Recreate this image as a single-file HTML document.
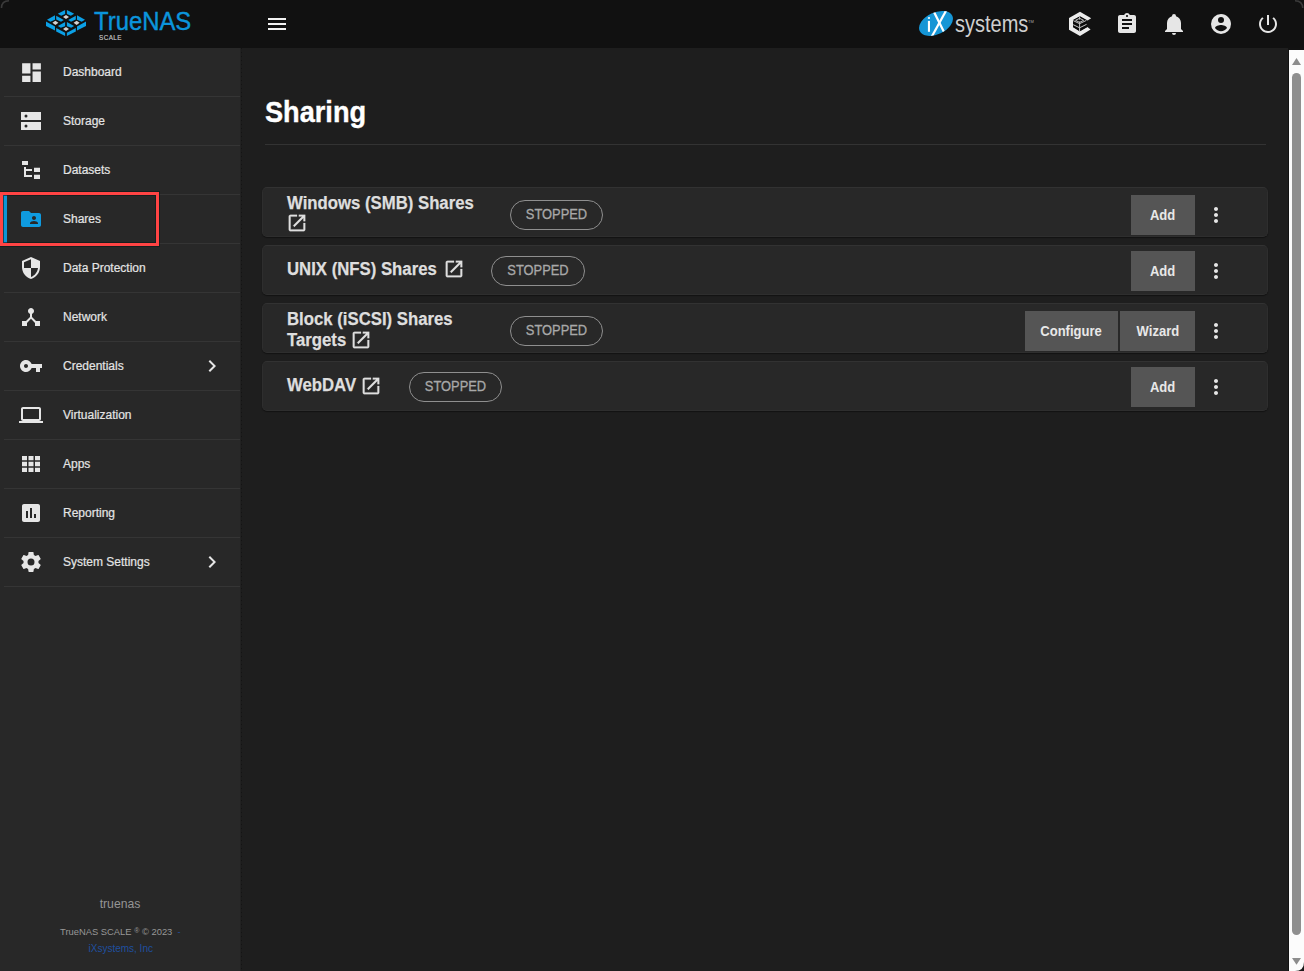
<!DOCTYPE html>
<html><head><meta charset="utf-8">
<style>
*{box-sizing:border-box;margin:0;padding:0}
html,body{width:1304px;height:971px;overflow:hidden;background:#1e1e1e;font-family:"Liberation Sans",sans-serif}
.abs{position:absolute}
svg{position:absolute;display:block}
#hdr{left:0;top:0;width:1304px;height:48px;background:#111111}
#side{left:0;top:48px;width:240px;height:923px;background:#282828}
#sideshadow{left:240px;top:48px;width:1px;height:923px;background:#222222}
#sidedots{left:241px;top:48px;width:1px;height:923px;background:repeating-linear-gradient(to bottom,#141414 0 1.5px,#1c1c1c 1.5px 4px)}
.item{position:absolute;left:0;width:240px;height:48px}
.item .lbl{position:absolute;left:63px;top:0;line-height:48px;font-size:12px;color:#e4e4e4;-webkit-text-stroke:0.2px #e4e4e4;white-space:nowrap}
.div{position:absolute;left:4px;width:236px;height:1px;background:#353535}
.ico{fill:#e6e6e6}
#lborder{left:0;top:0;width:1px;height:971px;background:#000}
.card{position:absolute;left:262px;width:1006px;height:50px;background:#282828;border-radius:5px;border:1px solid #2e2e2e;border-top-color:#323232;box-shadow:0 1px 1px #121212}
.ttl{position:absolute;font-weight:bold;font-size:18px;color:#dedede;-webkit-text-stroke:0.25px #dedede;white-space:nowrap;transform-origin:0 0;transform:scaleX(0.93)}
.chip{position:absolute;height:30px;border:1px solid #8f8f8f;border-radius:15px}
.chip span{position:absolute;left:0;right:0;top:-1px;line-height:28px;text-align:center;font-size:14px;color:#a8a8a8;-webkit-text-stroke:0.3px #a8a8a8;transform:scaleX(0.92)}
.btn{position:absolute;height:40px;background:#555555;color:#e8e8e8;font-weight:bold;font-size:14px;line-height:40px;text-align:center}
.btn span{display:inline-block;transform:scaleX(0.93)}
</style></head><body>
<div id="lborder" class="abs"></div>
<!-- HEADER -->
<div id="hdr" class="abs">
  <!-- TrueNAS logo mark -->
  <svg style="left:44px;top:6px" width="46" height="34" viewBox="44 6 46 34"><polygon points="57.8,13.7 65.1,9.9 65.1,14.1 61.2,15.7" fill="#0ba0e6"/><polygon points="74.2,13.7 66.9,9.9 66.9,14.1 70.8,15.7" fill="#0ba0e6"/><polygon points="47.0,19.7 55.0,15.3 55.0,19.7 50.3,21.8" fill="#0ba0e6"/><polygon points="85.0,19.7 77.0,15.3 77.0,19.7 81.7,21.8" fill="#0ba0e6"/><polygon points="46.0,21.4 46.0,25.9 55.0,30.5 55.0,26.4" fill="#0ba0e6"/><polygon points="86.0,21.4 86.0,25.9 77.0,30.5 77.0,26.4" fill="#0ba0e6"/><polygon points="56.2,15.8 63.8,20.0 61.0,21.8 56.2,19.4" fill="#0ba0e6"/><polygon points="75.8,15.8 68.2,20.0 71.0,21.8 75.8,19.4" fill="#0ba0e6"/><polygon points="57.9,26.0 65.1,22.1 65.1,26.2 60.8,27.7" fill="#0ba0e6"/><polygon points="74.1,26.0 66.9,22.1 66.9,26.2 71.2,27.7" fill="#0ba0e6"/><polygon points="56.2,28.1 65.1,32.7 65.1,36.1 56.2,31.5" fill="#0ba0e6"/><polygon points="75.8,28.1 66.9,32.7 66.9,36.1 75.8,31.5" fill="#0ba0e6"/><polygon points="63,17 66,14.9 69,17 66,19.1" fill="#d2d2d2"/><polygon points="52.4,22.8 55.4,20.7 58.4,22.8 55.4,24.900000000000002" fill="#d2d2d2"/><polygon points="73.6,22.8 76.6,20.7 79.6,22.8 76.6,24.900000000000002" fill="#d2d2d2"/><polygon points="63,29 66,26.9 69,29 66,31.1" fill="#d2d2d2"/></svg>
  <div class="abs" style="left:94px;top:7px;font-size:25px;color:#0b95dc;-webkit-text-stroke:0.4px #0b95dc;white-space:nowrap;transform-origin:0 0;transform:scaleX(0.955)">TrueNAS</div>
  <div class="abs" style="left:99px;top:33.5px;font-size:6.3px;color:#c8c8c8;letter-spacing:0.45px;-webkit-text-stroke:0.15px #c8c8c8">SCALE</div>
  <!-- hamburger -->
  <svg style="left:265px;top:12px" width="24" height="24" viewBox="0 0 24 24"><path fill="#f2f2f2" d="M3 18h18v-2H3v2zm0-5h18v-2H3v2zm0-7v2h18V6H3z"/></svg>
  <!-- iXsystems -->
  <svg style="left:914px;top:6px" width="44" height="34" viewBox="914 6 44 34">
    <defs><clipPath id="ixc"><ellipse cx="936" cy="23.4" rx="18" ry="10.9" transform="rotate(-25 936 23.4)"/></clipPath></defs>
    <ellipse cx="936" cy="23.4" rx="18" ry="10.9" transform="rotate(-25 936 23.4)" fill="#1596d6"/>
    <rect x="927.9" y="20.9" width="2.1" height="10.9" fill="#fff"/>
    <rect x="927.9" y="17.2" width="2.1" height="1.6" fill="#fff"/>
    <g clip-path="url(#ixc)" stroke="#fff" stroke-width="2.2">
      <line x1="932.5" y1="9" x2="944.5" y2="33"/>
      <line x1="947" y1="9" x2="931" y2="38"/>
    </g>
  </svg>
  <div class="abs" style="left:954.5px;top:11px;font-size:23px;line-height:normal;color:#cfcfcf;white-space:nowrap;transform-origin:0 0;transform:scaleX(0.87)">systems</div><div class="abs" style="left:1028px;top:19px;font-size:4px;color:#aaa">TM</div>
  <!-- right icons -->
  <svg style="left:1066px;top:10px" width="28" height="28" viewBox="1066 10 28 28">
    <path fill="#ececec" d="M1080 11.8 L1091.2 18.3 L1087.6 20.5 L1080 16.2 L1073 20 L1073 27.1 L1080 31.2 L1087.4 27 L1090.6 29.5 L1080 36 L1069 29.7 L1069 17.9 Z"/>
    <path fill="#0a0a0a" d="M1079.6 16.4 L1086.8 20.4 L1086.8 27.2 L1079.6 31.2 L1073.2 27.2 L1073.2 20.3 Z"/>
    <g stroke="#c4c4c4" stroke-width="1" fill="none">
      <path d="M1079.6 16.4 V31.2"/>
      <path d="M1073.2 20.6 L1079.6 23.7 L1086.4 20.4"/>
      <path d="M1073.2 24.7 L1079.6 27.8 L1086.6 24.3"/>
      <path d="M1075.6 20.3 L1079.6 18.3 L1083.6 20.3 L1079.6 22.4 Z"/>
    </g>
    <path fill="#0a0a0a" d="M1077.6 20.4 L1079.6 19.5 L1081.6 20.4 L1079.6 21.5 Z"/>
  </svg>
  <svg style="left:1115px;top:12px" width="24" height="24" viewBox="0 0 24 24"><path fill="#e6e6e6" d="M19 3h-4.18C14.4 1.84 13.3 1 12 1c-1.3 0-2.4.84-2.82 2H5c-1.1 0-2 .9-2 2v14c0 1.1.9 2 2 2h14c1.1 0 2-.9 2-2V5c0-1.1-.9-2-2-2zm-7 0c.55 0 1 .45 1 1s-.45 1-1 1-1-.45-1-1 .45-1 1-1zm2 14H7v-2h7v2zm3-4H7v-2h10v2zm0-4H7V7h10v2z"/></svg>
  <svg style="left:1162px;top:12px" width="24" height="24" viewBox="0 0 24 24"><path fill="#e6e6e6" d="M21,19V20H3V19L5,17V11C5,7.9 7.03,5.17 10,4.29C10,4.19 10,4.1 10,4A2,2 0 0,1 12,2A2,2 0 0,1 14,4C14,4.1 14,4.19 14,4.29C16.97,5.17 19,7.9 19,11V17L21,19M14,21A2,2 0 0,1 12,23A2,2 0 0,1 10,21"/></svg>
  <svg style="left:1209px;top:12px" width="24" height="24" viewBox="0 0 24 24"><path fill="#e6e6e6" d="M12,19.2C9.5,19.2 7.29,17.92 6,16C6.03,14 10,12.9 12,12.9C14,12.9 17.97,14 18,16C16.71,17.92 14.5,19.2 12,19.2M12,5A3,3 0 0,1 15,8A3,3 0 0,1 12,11A3,3 0 0,1 9,8A3,3 0 0,1 12,5M12,2A10,10 0 0,0 2,12A10,10 0 0,0 12,22A10,10 0 0,0 22,12C22,6.47 17.5,2 12,2Z"/></svg>
  <svg style="left:1256px;top:12px" width="24" height="24" viewBox="0 0 24 24"><path fill="#e6e6e6" d="M13 3h-2v10h2V3zm4.83 2.17l-1.42 1.42C17.99 7.86 19 9.81 19 12c0 3.87-3.13 7-7 7s-7-3.13-7-7c0-2.19 1.01-4.14 2.58-5.42L6.17 5.17C4.23 6.82 3 9.26 3 12c0 4.97 4.03 9 9 9s9-4.03 9-9c0-2.74-1.23-5.18-3.17-6.83z"/></svg>
</div>
<!-- SIDEBAR -->
<div id="side" class="abs"></div>
<div id="sideshadow" class="abs"></div><div id="sidedots" class="abs"></div>
<div id="menu" class="abs" style="left:0;top:0;width:240px;height:971px">
  <div class="item" style="top:48px"><span class="lbl">Dashboard</span></div>
  <div class="div" style="top:96px"></div>
  <div class="item" style="top:97px"><span class="lbl">Storage</span></div>
  <div class="div" style="top:145px"></div>
  <div class="item" style="top:146px"><span class="lbl">Datasets</span></div>
  <div class="div" style="top:194px"></div>
  <div class="item" style="top:195px"><span class="lbl">Shares</span></div>
  <div class="div" style="top:243px"></div>
  <div class="item" style="top:244px"><span class="lbl">Data Protection</span></div>
  <div class="div" style="top:292px"></div>
  <div class="item" style="top:293px"><span class="lbl">Network</span></div>
  <div class="div" style="top:341px"></div>
  <div class="item" style="top:342px"><span class="lbl">Credentials</span></div>
  <div class="div" style="top:390px"></div>
  <div class="item" style="top:391px"><span class="lbl">Virtualization</span></div>
  <div class="div" style="top:439px"></div>
  <div class="item" style="top:440px"><span class="lbl">Apps</span></div>
  <div class="div" style="top:488px"></div>
  <div class="item" style="top:489px"><span class="lbl">Reporting</span></div>
  <div class="div" style="top:537px"></div>
  <div class="item" style="top:538px"><span class="lbl">System Settings</span></div>
  <div class="div" style="top:586px"></div>
</div>
<!-- sidebar icons -->
<svg style="left:18.5px;top:59.5px" width="25" height="25" viewBox="0 0 24 24"><path class="ico" d="M3 13h8V3H3v10zm0 8h8v-6H3v6zm10 0h8V11h-8v10zm0-18v6h8V3h-8z"/></svg>
<svg style="left:19px;top:109px" width="24" height="24" viewBox="0 0 24 24"><path class="ico" fill-rule="evenodd" d="M2 3h20v8H2zM7 8.5a1.5 1.5 0 1 0 0-3 1.5 1.5 0 1 0 0 3zM2 13h20v8H2zM7 18.5a1.5 1.5 0 1 0 0-3 1.5 1.5 0 1 0 0 3z"/></svg>
<svg style="left:19px;top:158px" width="24" height="24" viewBox="0 0 24 24"><path class="ico" d="M3 3h6v4H3zM5 9h2v10H5zM7 11h6v2H7zM7 17h6v2H7zM15 9.8h6v4.2h-6zM15 16.8h6v4.2h-6z"/></svg>
<svg style="left:19px;top:207px" width="24" height="24" viewBox="0 0 24 24"><path fill="#0f9be0" d="M20 6h-8l-2-2H4c-1.1 0-1.99.9-1.99 2L2 18c0 1.1.9 2 2 2h16c1.1 0 2-.9 2-2V8c0-1.1-.9-2-2-2zm-5 3c1.1 0 2 .9 2 2s-.9 2-2 2-2-.9-2-2 .9-2 2-2zm4 8h-8v-1c0-1.33 2.67-2 4-2s4 .67 4 2v1z"/></svg>
<svg style="left:19px;top:256px" width="24" height="24" viewBox="0 0 24 24"><path class="ico" d="M12,12H19C18.47,16.11 15.72,19.78 12,20.92V12H5V6.3L12,3.19M12,1L3,5V11C3,16.55 6.84,21.73 12,23C17.16,21.73 21,16.55 21,11V5L12,1Z"/></svg>
<svg style="left:19px;top:305px" width="24" height="24" viewBox="0 0 24 24"><path class="ico" d="M17 16l-4-4V8.82C14.16 8.4 15 7.3 15 6c0-1.66-1.34-3-3-3S9 4.34 9 6c0 1.3.84 2.4 2 2.82V12l-4 4H3v5h5v-3.05l4-4.2 4 4.2V21h5v-5h-4z"/></svg>
<svg style="left:19px;top:354px" width="24" height="24" viewBox="0 0 24 24"><path class="ico" d="M12.65 10C11.83 7.67 9.61 6 7 6c-3.31 0-6 2.69-6 6s2.69 6 6 6c2.61 0 4.83-1.67 5.65-4H17v4h4v-4h2v-4H12.65zM7 14c-1.1 0-2-.9-2-2s.9-2 2-2 2 .9 2 2-.9 2-2 2z"/></svg>
<svg style="left:19px;top:403px" width="24" height="24" viewBox="0 0 24 24"><path class="ico" d="M20 18c1.1 0 1.99-.9 1.99-2L22 6c0-1.1-.9-2-2-2H4c-1.1 0-2 .9-2 2v10c0 1.1.9 2 2 2H0v2h24v-2h-4zM4 6h16v10H4V6z"/></svg>
<svg style="left:19px;top:452px" width="24" height="24" viewBox="0 0 24 24"><path class="ico" d="M3 4h5v4.3H3zM9.5 4h5v4.3h-5zM16 4h5v4.3h-5zM3 9.85h5v4.3H3zM9.5 9.85h5v4.3h-5zM16 9.85h5v4.3h-5zM3 15.7h5V20H3zM9.5 15.7h5V20h-5zM16 15.7h5V20h-5z"/></svg>
<svg style="left:19px;top:501px" width="24" height="24" viewBox="0 0 24 24"><path class="ico" d="M19 3H5c-1.1 0-2 .9-2 2v14c0 1.1.9 2 2 2h14c1.1 0 2-.9 2-2V5c0-1.1-.9-2-2-2zM9 17H7v-7h2v7zm4 0h-2V7h2v10zm4 0h-2v-4h2v4z"/></svg>
<svg style="left:19px;top:550px" width="24" height="24" viewBox="0 0 24 24"><path class="ico" d="M12,15.5A3.5,3.5 0 0,1 8.5,12A3.5,3.5 0 0,1 12,8.5A3.5,3.5 0 0,1 15.5,12A3.5,3.5 0 0,1 12,15.5M19.43,12.97C19.47,12.65 19.5,12.33 19.5,12C19.5,11.67 19.47,11.34 19.43,11L21.54,9.37C21.73,9.22 21.78,8.95 21.66,8.73L19.66,5.27C19.54,5.05 19.27,4.96 19.050,5.05L16.56,6.05C16.04,5.66 15.5,5.32 14.87,5.07L14.5,2.42C14.46,2.18 14.25,2 14,2H10C9.75,2 9.54,2.18 9.5,2.42L9.13,5.07C8.5,5.32 7.96,5.66 7.44,6.05L4.95,5.05C4.73,4.96 4.46,5.05 4.34,5.27L2.34,8.730C2.21,8.95 2.27,9.22 2.46,9.37L4.57,11C4.53,11.34 4.5,11.67 4.5,12C4.5,12.33 4.53,12.65 4.57,12.97L2.46,14.63C2.27,14.78 2.21,15.05 2.34,15.27L4.34,18.73C4.46,18.95 4.73,19.03 4.95,18.95L7.44,17.94C7.96,18.34 8.5,18.68 9.13,18.93L9.5,21.58C9.54,21.82 9.75,22 10,22H14C14.25,22 14.46,21.82 14.5,21.58L14.87,18.93C15.5,18.67 16.04,18.34 16.56,17.94L19.05,18.95C19.27,19.03 19.54,18.95 19.66,18.73L21.66,15.27C21.78,15.05 21.73,14.78 21.54,14.63L19.43,12.97Z"/></svg>
<svg style="left:200px;top:354px" width="24" height="24" viewBox="0 0 24 24"><path class="ico" d="M10 6L8.59 7.41 13.17 12l-4.58 4.59L10 18l6-6z"/></svg>
<svg style="left:200px;top:550px" width="24" height="24" viewBox="0 0 24 24"><path class="ico" d="M10 6L8.59 7.41 13.17 12l-4.58 4.59L10 18l6-6z"/></svg>
<!-- selected indicator + red box -->
<div class="abs" style="left:3px;top:195px;width:4px;height:48px;background:#0d95d6"></div>
<div class="abs" style="left:0;top:192px;width:159px;height:54px;border:3px solid #ff4444;box-shadow:0 0 0 1px rgba(10,25,25,0.6),inset 0 0 0 1px rgba(10,25,25,0.6)"></div>
<!-- sidebar footer -->
<div class="abs" style="left:0;top:896.5px;width:240px;text-align:center;font-size:12.2px;color:#959595">truenas</div>
<div class="abs" style="left:60px;top:926px;font-size:9.4px;color:#979797;white-space:nowrap">TrueNAS SCALE <span style="font-size:7px;position:relative;top:-2px">®</span> © 2023 &nbsp;<span style="color:#1f4f9f">-</span></div>
<div class="abs" style="left:88.5px;top:943px;font-size:10px;color:#1f4f9f;white-space:nowrap">iXsystems, Inc</div>

<!-- MAIN -->
<div class="abs" style="left:265px;top:95px;font-size:30px;font-weight:bold;color:#ffffff;-webkit-text-stroke:0.4px #fff;white-space:nowrap;transform-origin:0 0;transform:scaleX(0.905)">Sharing</div>
<div class="abs" style="left:265px;top:144px;width:1001px;height:1px;background:#333333"></div>

<div class="card" style="top:187px"></div>
<div class="card" style="top:245px"></div>
<div class="card" style="top:303px"></div>
<div class="card" style="top:361px"></div>

<!-- card contents -->
<div class="ttl" style="left:287px;top:193px;line-height:21px">Windows (SMB) Shares</div>
<svg style="left:285.8px;top:212.3px" width="22" height="22" viewBox="0 0 24 24"><path fill="#e0e0e0" stroke="#e0e0e0" stroke-width="0.25" d="M19 19H5V5h7V3H5c-1.11 0-2 .9-2 2v14c0 1.1.89 2 2 2h14c1.1 0 2-.9 2-2v-7h-2v7zM14 3v2h3.59l-9.83 9.83 1.41 1.41L19 6.41V10h2V3h-7z"/></svg>
<div class="chip" style="left:510px;top:200px;width:93px"><span>STOPPED</span></div>
<div class="btn" style="left:1131px;top:195px;width:64px"><span>Add</span></div>
<svg style="left:1203.5px;top:203px" width="24" height="24" viewBox="0 0 24 24"><path fill="#e6e6e6" d="M12 8c1.1 0 2-.9 2-2s-.9-2-2-2-2 .9-2 2 .9 2 2 2zm0 2c-1.1 0-2 .9-2 2s.9 2 2 2 2-.9 2-2-.9-2-2-2zm0 6c-1.1 0-2 .9-2 2s.9 2 2 2 2-.9 2-2-.9-2-2-2z"/></svg>

<div class="ttl" style="left:287px;top:259px;line-height:21px">UNIX (NFS) Shares</div>
<svg style="left:442.85px;top:258.25px" width="22" height="22" viewBox="0 0 24 24"><path fill="#e0e0e0" stroke="#e0e0e0" stroke-width="0.25" d="M19 19H5V5h7V3H5c-1.11 0-2 .9-2 2v14c0 1.1.89 2 2 2h14c1.1 0 2-.9 2-2v-7h-2v7zM14 3v2h3.59l-9.83 9.83 1.41 1.41L19 6.41V10h2V3h-7z"/></svg>
<div class="chip" style="left:491px;top:256px;width:94px"><span>STOPPED</span></div>
<div class="btn" style="left:1131px;top:251px;width:64px"><span>Add</span></div>
<svg style="left:1203.5px;top:259px" width="24" height="24" viewBox="0 0 24 24"><path fill="#e6e6e6" d="M12 8c1.1 0 2-.9 2-2s-.9-2-2-2-2 .9-2 2 .9 2 2 2zm0 2c-1.1 0-2 .9-2 2s.9 2 2 2 2-.9 2-2-.9-2-2-2zm0 6c-1.1 0-2 .9-2 2s.9 2 2 2 2-.9 2-2-.9-2-2-2z"/></svg>

<div class="ttl" style="left:287px;top:308.5px;line-height:21px">Block (iSCSI) Shares<br>Targets</div>
<svg style="left:349.65px;top:328.85px" width="22" height="22" viewBox="0 0 24 24"><path fill="#e0e0e0" stroke="#e0e0e0" stroke-width="0.25" d="M19 19H5V5h7V3H5c-1.11 0-2 .9-2 2v14c0 1.1.89 2 2 2h14c1.1 0 2-.9 2-2v-7h-2v7zM14 3v2h3.59l-9.83 9.83 1.41 1.41L19 6.41V10h2V3h-7z"/></svg>
<div class="chip" style="left:510px;top:316px;width:93px"><span>STOPPED</span></div>
<div class="btn" style="left:1025px;top:311px;width:93px"><span>Configure</span></div>
<div class="btn" style="left:1120px;top:311px;width:75px"><span>Wizard</span></div>
<svg style="left:1203.5px;top:319px" width="24" height="24" viewBox="0 0 24 24"><path fill="#e6e6e6" d="M12 8c1.1 0 2-.9 2-2s-.9-2-2-2-2 .9-2 2 .9 2 2 2zm0 2c-1.1 0-2 .9-2 2s.9 2 2 2 2-.9 2-2-.9-2-2-2zm0 6c-1.1 0-2 .9-2 2s.9 2 2 2 2-.9 2-2-.9-2-2-2z"/></svg>

<div class="ttl" style="left:287px;top:374.5px;line-height:21px">WebDAV</div>
<svg style="left:360.45px;top:374.65px" width="22" height="22" viewBox="0 0 24 24"><path fill="#e0e0e0" stroke="#e0e0e0" stroke-width="0.25" d="M19 19H5V5h7V3H5c-1.11 0-2 .9-2 2v14c0 1.1.89 2 2 2h14c1.1 0 2-.9 2-2v-7h-2v7zM14 3v2h3.59l-9.83 9.83 1.41 1.41L19 6.41V10h2V3h-7z"/></svg>
<div class="chip" style="left:409px;top:372px;width:93px"><span>STOPPED</span></div>
<div class="btn" style="left:1131px;top:367px;width:64px"><span>Add</span></div>
<svg style="left:1203.5px;top:375px" width="24" height="24" viewBox="0 0 24 24"><path fill="#e6e6e6" d="M12 8c1.1 0 2-.9 2-2s-.9-2-2-2-2 .9-2 2 .9 2 2 2zm0 2c-1.1 0-2 .9-2 2s.9 2 2 2 2-.9 2-2-.9-2-2-2zm0 6c-1.1 0-2 .9-2 2s.9 2 2 2 2-.9 2-2-.9-2-2-2z"/></svg>

<!-- scrollbar -->
<div class="abs" style="left:1288px;top:48px;width:16px;height:923px;background:#121212"></div>
<div class="abs" style="left:1289px;top:50px;width:15px;height:921px;background:#fcfcfc"></div>
<svg style="left:1288px;top:48px" width="16" height="923" viewBox="1288 48 16 923">
  <polygon points="1292,65 1301,65 1296.5,58" fill="#8d8d8d"/>
  <rect x="1292" y="73" width="9" height="862" rx="4.5" fill="#8f8f8f"/>
  <polygon points="1292,958 1301,958 1296.5,964.8" fill="#8d8d8d"/>
  <path d="M1304 962 Q1304 971 1295 971 L1304 971 Z" fill="#1a1a1a"/>
</svg>
<!-- window corners -->
<svg style="left:0;top:0" width="12" height="12" viewBox="0 0 12 12"><path d="M1.5 8 Q1.5 1 9 0.8" stroke="#3a3a3a" stroke-width="1.6" fill="none"/></svg>
<svg style="left:1292px;top:0" width="12" height="12" viewBox="0 0 12 12"><path d="M3 0.8 Q10.5 1 10.8 8" stroke="#3a3a3a" stroke-width="1.6" fill="none"/></svg>
</body></html>
